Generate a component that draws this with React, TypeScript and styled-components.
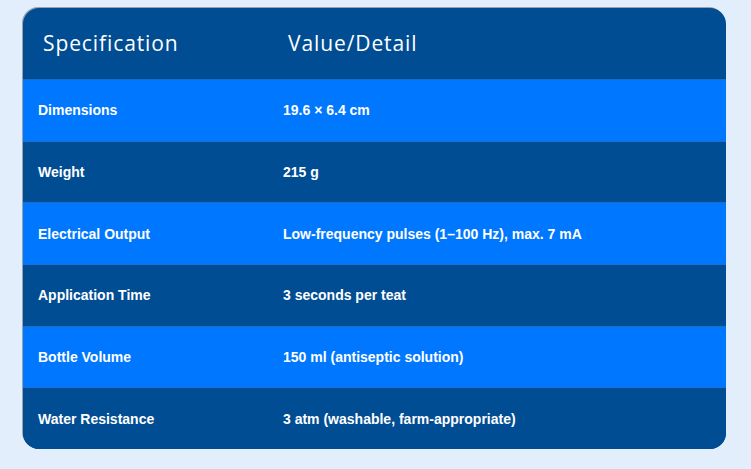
import React from 'react'
import styled, { createGlobalStyle } from 'styled-components'

const specs: [string, string][] = [
    ['Dimensions', '19.6 × 6.4 cm'],
    ['Weight', '215 g'],
    ['Electrical Output', 'Low-frequency pulses (1–100 Hz), max. 7 mA'],
    ['Application Time', '3 seconds per teat'],
    ['Bottle Volume', '150 ml (antiseptic solution)'],
    ['Water Resistance', '3 atm (washable, farm-appropriate)'],
]

function App() {
    return (
        <Page>
            <GlobalStyle />
            <Card>
                <Table>
                    <thead>
                        <tr>
                            <Th className="first">Specification</Th>
                            <Th>Value/Detail</Th>
                        </tr>
                    </thead>
                    <tbody>
                        {specs.map(([name, value], i) => (
                            <Row key={name} bright={i % 2 === 0}>
                                <td className="name">{name}</td>
                                <td>{value}</td>
                            </Row>
                        ))}
                    </tbody>
                </Table>
            </Card>
        </Page>
    )
}

const GlobalStyle = createGlobalStyle`
    html, body {
        margin:0;
        background:#e3eefc;
    }
`

const Page = styled.div`
    padding:8px 25px 19px 23px;
    font-family:"Liberation Sans", Arial, sans-serif;
`

const Card = styled.div`
    width:703px;
    border-radius:16px;
    overflow:hidden;
    background:#004d94;
    box-shadow:-1px -1px 0 #9aa3ad;
`

const Table = styled.table`
    width:100%;
    border-collapse:collapse;
    table-layout:fixed;
`

const Th = styled.th`
    text-align:left;
    color:#fff;
    font-family:"Open Sans", "Noto Sans", sans-serif;
    font-weight:400;
    font-size:21px;
    line-height:27px;
    letter-spacing:0.9px;
    padding:22px 20px;
    border-bottom:1px solid #1a6fc4;
    &.first{
        width:205px;
    }
`

const Row = styled.tr<{ bright: boolean }>`
    background:${p => p.bright ? '#0077ff' : '#004d94'};
    >td{
        height:61.7px;
        box-sizing:border-box;
        color:#fff;
        font-weight:700;
        font-size:14px;
        line-height:16px;
        padding:0 15px;
        border-bottom:1px solid ${p => p.bright ? '#1a6fd6' : '#1a6fc4'};
    }
    &:last-child>td{
        height:61px;
        border-bottom:none;
    }
`

export default App
